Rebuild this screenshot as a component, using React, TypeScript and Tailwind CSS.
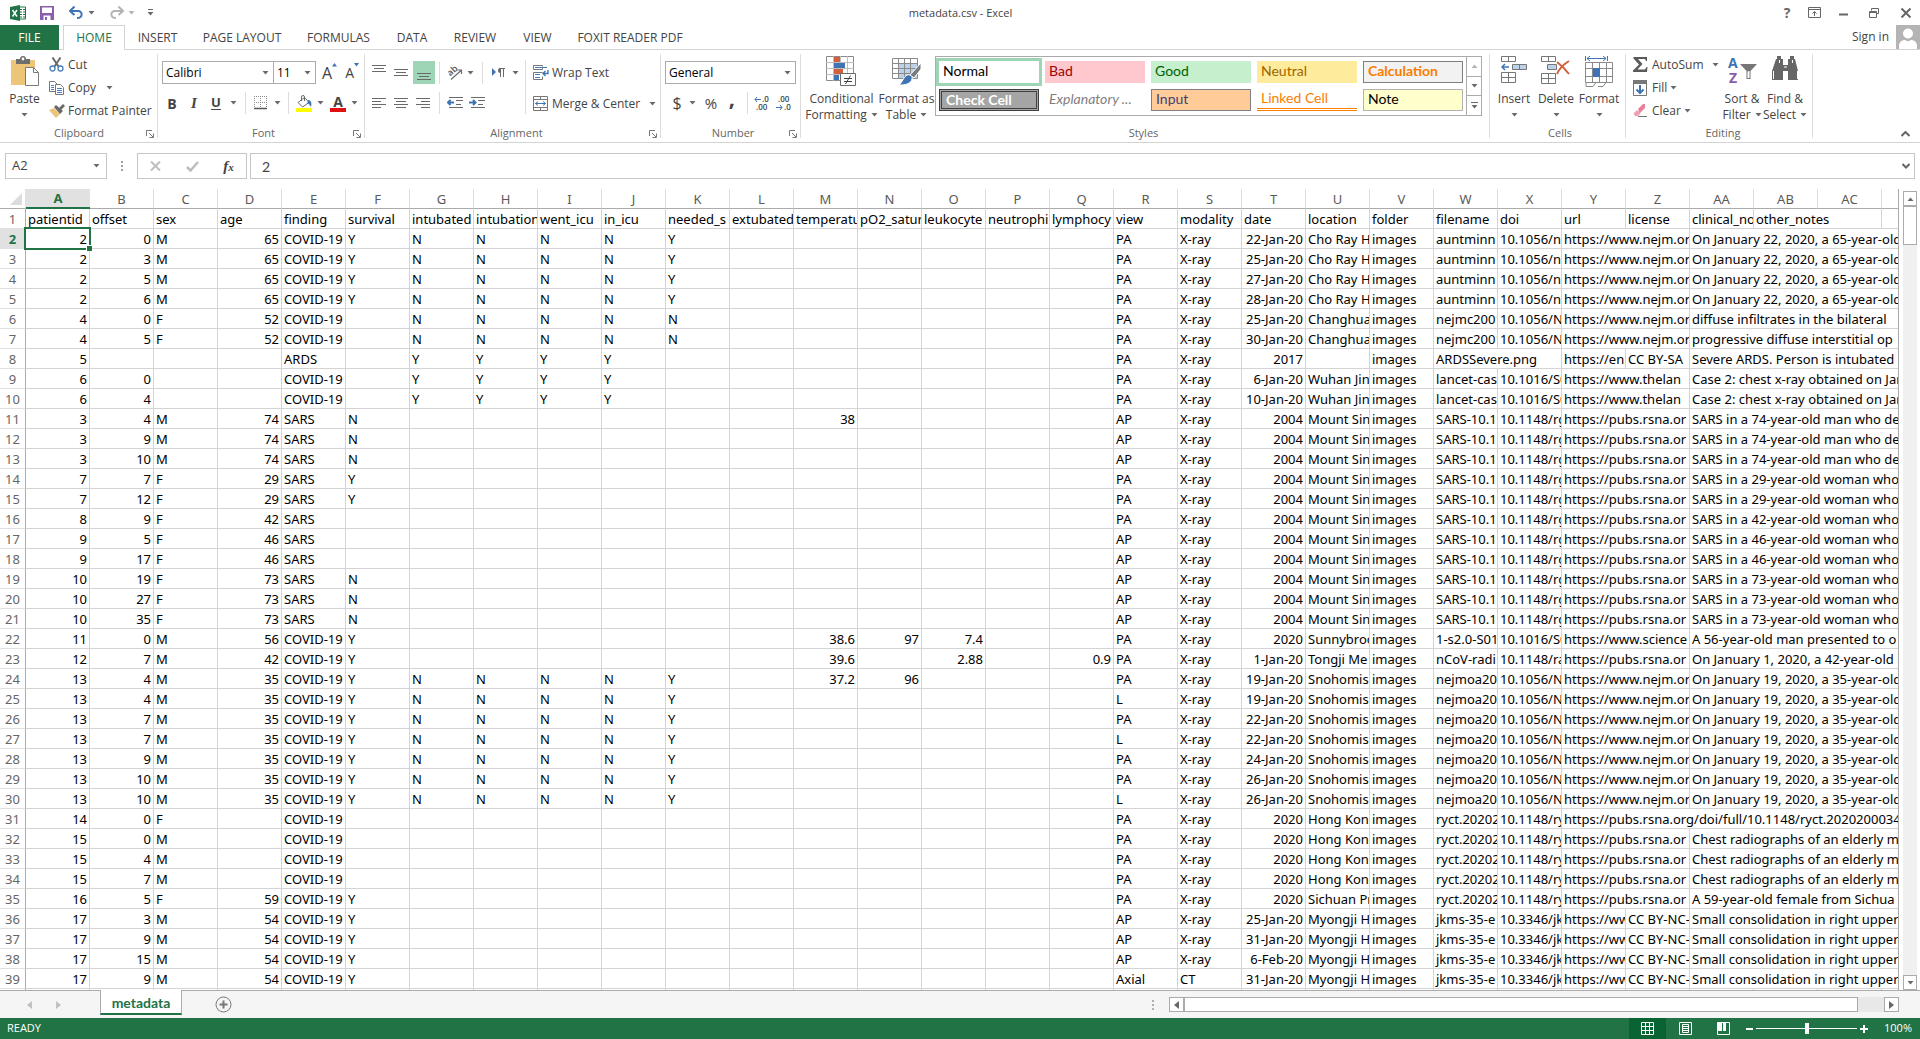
import { useState, ReactNode } from 'react';

const headers =
  'patientid|offset|sex|age|finding|survival|intubated|intubation|went_icu|in_icu|needed_s|extubated|temperatu|pO2_satur|leukocyte|neutrophi|lymphocy|view|modality|date|location|folder|filename|doi|url|license|clinical_no|other_notes';

// location, folder, filename, doi, url, license
const sources: Record<string, string> = {
  choRay: 'Cho Ray H|images|auntminn|10.1056/n|https://www.nejm.or|',
  changhua: 'Changhua|images|nejmc2001|10.1056/N|https://www.nejm.or|',
  ards: '|images|ARDSSevere.png||https://en.|CC BY-SA',
  wuhan: 'Wuhan Jin|images|lancet-cas|10.1016/S0|https://www.thelan|',
  sinai: 'Mount Sin|images|SARS-10.1|10.1148/rg|https://pubs.rsna.or|',
  sunny: 'Sunnybroo|images|1-s2.0-S01|10.1016/S0|https://www.science|',
  tongji: 'Tongji Me|images|nCoV-radi|10.1148/ra|https://pubs.rsna.or|',
  snohomish: 'Snohomis|images|nejmoa20|10.1056/N|https://www.nejm.or|',
  hkUrl: 'Hong Kong|images|ryct.20202|10.1148/ry|https://pubs.rsna.org/doi/full/10.1148/ryct.2020200034|',
  hk: 'Hong Kong|images|ryct.20202|10.1148/ry|https://pubs.rsna.or|',
  sichuan: 'Sichuan Pr|images|ryct.20202|10.1148/ry|https://pubs.rsna.or|',
  myongji: 'Myongji H|images|jkms-35-e|10.3346/jk|https://ww|CC BY-NC-',
};

const jan22 = 'On January 22, 2020, a 65-year-old';
const jan19 = 'On January 19, 2020, a 35-year-old';
const case2 = 'Case 2: chest x-ray obtained on Jan';
const sarsMan = 'SARS in a 74-year-old man who de';
const sars29 = 'SARS in a 29-year-old woman who';
const sars46 = 'SARS in a 46-year-old woman who';
const sars73 = 'SARS in a 73-year-old woman who';
const elderly = 'Chest radiographs of an elderly m';
const small = 'Small consolidation in right upper';

// patient columns (A-Q), scan columns (R-T), source, clinical notes
const records: [string, string, string, string][] = [
  ['2|0|M|65|COVID-19|Y|N|N|N|N|Y||||||', 'PA|X-ray|22-Jan-20', 'choRay', jan22],
  ['2|3|M|65|COVID-19|Y|N|N|N|N|Y||||||', 'PA|X-ray|25-Jan-20', 'choRay', jan22],
  ['2|5|M|65|COVID-19|Y|N|N|N|N|Y||||||', 'PA|X-ray|27-Jan-20', 'choRay', jan22],
  ['2|6|M|65|COVID-19|Y|N|N|N|N|Y||||||', 'PA|X-ray|28-Jan-20', 'choRay', jan22],
  ['4|0|F|52|COVID-19||N|N|N|N|N||||||', 'PA|X-ray|25-Jan-20', 'changhua', 'diffuse infiltrates in the bilateral'],
  ['4|5|F|52|COVID-19||N|N|N|N|N||||||', 'PA|X-ray|30-Jan-20', 'changhua', 'progressive diffuse interstitial op'],
  ['5||||ARDS||Y|Y|Y|Y|||||||', 'PA|X-ray|2017', 'ards', 'Severe ARDS. Person is intubated'],
  ['6|0|||COVID-19||Y|Y|Y|Y|||||||', 'PA|X-ray|6-Jan-20', 'wuhan', case2],
  ['6|4|||COVID-19||Y|Y|Y|Y|||||||', 'PA|X-ray|10-Jan-20', 'wuhan', case2],
  ['3|4|M|74|SARS|N|||||||38||||', 'AP|X-ray|2004', 'sinai', sarsMan],
  ['3|9|M|74|SARS|N|||||||||||', 'AP|X-ray|2004', 'sinai', sarsMan],
  ['3|10|M|74|SARS|N|||||||||||', 'AP|X-ray|2004', 'sinai', sarsMan],
  ['7|7|F|29|SARS|Y|||||||||||', 'PA|X-ray|2004', 'sinai', sars29],
  ['7|12|F|29|SARS|Y|||||||||||', 'PA|X-ray|2004', 'sinai', sars29],
  ['8|9|F|42|SARS||||||||||||', 'PA|X-ray|2004', 'sinai', 'SARS in a 42-year-old woman who'],
  ['9|5|F|46|SARS||||||||||||', 'AP|X-ray|2004', 'sinai', sars46],
  ['9|17|F|46|SARS||||||||||||', 'AP|X-ray|2004', 'sinai', sars46],
  ['10|19|F|73|SARS|N|||||||||||', 'AP|X-ray|2004', 'sinai', sars73],
  ['10|27|F|73|SARS|N|||||||||||', 'AP|X-ray|2004', 'sinai', sars73],
  ['10|35|F|73|SARS|N|||||||||||', 'AP|X-ray|2004', 'sinai', sars73],
  ['11|0|M|56|COVID-19|Y|||||||38.6|97|7.4||', 'PA|X-ray|2020', 'sunny', 'A 56-year-old man presented to o'],
  ['12|7|M|42|COVID-19|Y|||||||39.6||2.88||0.9', 'PA|X-ray|1-Jan-20', 'tongji', 'On January 1, 2020, a 42-year-old m'],
  ['13|4|M|35|COVID-19|Y|N|N|N|N|Y||37.2|96|||', 'PA|X-ray|19-Jan-20', 'snohomish', jan19],
  ['13|4|M|35|COVID-19|Y|N|N|N|N|Y||||||', 'L|X-ray|19-Jan-20', 'snohomish', jan19],
  ['13|7|M|35|COVID-19|Y|N|N|N|N|Y||||||', 'PA|X-ray|22-Jan-20', 'snohomish', jan19],
  ['13|7|M|35|COVID-19|Y|N|N|N|N|Y||||||', 'L|X-ray|22-Jan-20', 'snohomish', jan19],
  ['13|9|M|35|COVID-19|Y|N|N|N|N|Y||||||', 'PA|X-ray|24-Jan-20', 'snohomish', jan19],
  ['13|10|M|35|COVID-19|Y|N|N|N|N|Y||||||', 'PA|X-ray|26-Jan-20', 'snohomish', jan19],
  ['13|10|M|35|COVID-19|Y|N|N|N|N|Y||||||', 'L|X-ray|26-Jan-20', 'snohomish', jan19],
  ['14|0|F||COVID-19||||||||||||', 'PA|X-ray|2020', 'hkUrl', ''],
  ['15|0|M||COVID-19||||||||||||', 'PA|X-ray|2020', 'hk', elderly],
  ['15|4|M||COVID-19||||||||||||', 'PA|X-ray|2020', 'hk', elderly],
  ['15|7|M||COVID-19||||||||||||', 'PA|X-ray|2020', 'hk', elderly],
  ['16|5|F|59|COVID-19|Y|||||||||||', 'PA|X-ray|2020', 'sichuan', 'A 59-year-old female from Sichua'],
  ['17|3|M|54|COVID-19|Y|||||||||||', 'AP|X-ray|25-Jan-20', 'myongji', small],
  ['17|9|M|54|COVID-19|Y|||||||||||', 'AP|X-ray|31-Jan-20', 'myongji', small],
  ['17|15|M|54|COVID-19|Y|||||||||||', 'AP|X-ray|6-Feb-20', 'myongji', small],
  ['17|9|M|54|COVID-19|Y|||||||||||', 'Axial|CT|31-Jan-20', 'myongji', small],
];

const letters = 'A B C D E F G H I J K L M N O P Q R S T U V W X Y Z AA AB AC'.split(' ');
const COLS = 30;
const numeric = [0, 1, 3, 12, 13, 14, 16, 19];
// columns whose long text runs over the empty cells to their right
const spilling = [22, 24, 26];

const rows: string[][] = [
  headers.split('|'),
  ...records.map(([patient, scan, source, notes]) =>
    [patient, scan, sources[source], notes].join('|').split('|')
  ),
  [],
];

const Caret = ({ className = '' }: { className?: string }) => (
  <svg width="7" height="4" viewBox="0 0 7 4" className={`shrink-0 ${className}`}>
    <path d="M0.5 0h6L3.5 3.5z" fill="#6a6a6a" />
  </svg>
);

const Sep = ({ className = 'h-[22px]' }: { className?: string }) => (
  <div className={`w-px shrink-0 bg-[#dcdcdc] ${className}`} />
);

interface GroupProps {
  label: string;
  className: string;
  launcher?: boolean;
  children: ReactNode;
}

const Group = ({ label, className, launcher, children }: GroupProps) => (
  <div className={`relative flex h-[92px] flex-col pt-[3px] ${className}`}>
    <div className="flex h-[72px]">{children}</div>
    <div className="flex h-[17px] items-center justify-center text-[11px] text-[#666]">{label}</div>
    <div className="absolute top-1 right-0 h-[84px] w-px bg-[#dcdcdc]" />
    {launcher && (
      <button aria-label={`${label} settings`} className="absolute right-1 bottom-1">
        <svg width="8" height="8" viewBox="0 0 8 8" fill="none" stroke="#777">
          <path d="M0.5 6V0.5H6M3 3l4 4M7.5 3.5v4h-4" />
        </svg>
      </button>
    )}
  </div>
);

interface BigButtonProps {
  icon: ReactNode;
  lines: [string, string?];
  className: string;
}

const BigButton = ({ icon, lines, className }: BigButtonProps) => (
  <button className={`flex shrink-0 flex-col items-center pt-[3px] leading-4 ${className}`}>
    <span className="flex h-[35px] items-start justify-center">{icon}</span>
    <span className="whitespace-nowrap">{lines[0]}</span>
    <span className="flex h-4 items-center gap-1 whitespace-nowrap">
      {lines[1]}
      <Caret />
    </span>
  </button>
);

const SmallButton = ({ icon, label, caret }: { icon: ReactNode; label: string; caret?: string }) => (
  <button className="flex h-[23px] items-center whitespace-nowrap">
    <span className="flex w-[19px] shrink-0">{icon}</span>
    {label}
    {caret && <Caret className={caret} />}
  </button>
);

/* ---------- ribbon icons ---------- */

const PasteIcon = () => (
  <svg width="30" height="31" viewBox="0 0 30 31">
    <path d="M1 4h24v9h-9v16H1z" fill="#ecc579" />
    <path d="M6 3h4a3 3 0 0 1 6 0h4v5H6z" fill="#6e6e6e" />
    <circle cx="13" cy="3" r="1.4" fill="#fff" />
    <path d="M15.5 11.5h8l5 5v13h-13z" fill="#fff" stroke="#7a7a7a" />
    <path d="M23.5 11.5v5h5" fill="none" stroke="#7a7a7a" />
  </svg>
);

const CutIcon = () => (
  <svg width="15" height="15" viewBox="0 0 15 15" fill="none">
    <path d="M3.5 0.5l6 9M11.5 0.5l-6 9" stroke="#6a6a6a" strokeWidth="2" />
    <circle cx="3.5" cy="11.5" r="2.5" stroke="#4a7ebb" strokeWidth="1.3" />
    <circle cx="11.5" cy="11.5" r="2.5" stroke="#4a7ebb" strokeWidth="1.3" />
  </svg>
);

const CopyIcon = () => (
  <svg width="15" height="14" viewBox="0 0 15 14" fill="#fff" stroke="#777">
    <path d="M0.5 0.5h5l3 3v7h-8z" />
    <path d="M2 4.5h3M2 6.5h3M2 8.5h3" stroke="#4a7ebb" />
    <path d="M6.5 3.5h5l3 3v7h-8z" />
    <path d="M8 7.5h5M8 9.5h5M8 11.5h5" stroke="#4a7ebb" />
  </svg>
);

const PainterIcon = () => (
  <svg width="16" height="14" viewBox="0 0 16 14">
    <path d="M0 6l5-2 6 6-4 4z" fill="#ecc579" />
    <path d="M5 3l2-2 7 6-3 3z" fill="#6a6a6a" />
    <path d="M10 4l4-4 2 2-4 4z" fill="#6a6a6a" />
  </svg>
);

const Lines = ({ spans, top }: { spans: [number, number][]; top: number }) => (
  <svg width="15" height="16" viewBox="0 0 15 16" stroke="#6a6a6a">
    {spans.map(([x1, x2], i) => (
      <path key={i} d={`M${x1} ${top + i * 3 + 0.5}H${x2}`} />
    ))}
  </svg>
);

const OrientationIcon = () => (
  <svg width="20" height="20" viewBox="-3 -2 20 20" fill="none" stroke="#6a6a6a">
    <text x="0" y="9" fontSize="9" fontWeight="600" fill="#555" stroke="none" transform="rotate(-42 5 6)">
      ab
    </text>
    <path d="M4 14.5L14 5.5M10.5 5h4v4" strokeWidth="1.2" />
  </svg>
);

const DirectionIcon = () => (
  <svg width="13" height="11" viewBox="0 0 13 11">
    <path d="M0 1v8L4 5z" fill="#3e74b4" />
    <path d="M7 1.5h6M8.5 1v9M11.5 1v9" stroke="#6a6a6a" fill="none" />
    <path d="M8.5 1v5a2.5 2.5 0 0 1 0-5z" fill="#6a6a6a" />
  </svg>
);

const IndentIcon = ({ right }: { right?: boolean }) => (
  <svg width="17" height="12" viewBox="0 0 17 12" fill="none" stroke="#6a6a6a">
    <path d="M2 0.5h14M9 3.5h7M9 7.5h5M2 10.5h14" />
    {right ? (
      <path d="M0 5.5h6M4 3l2.5 2.5L4 8" stroke="#3e74b4" strokeWidth="2" />
    ) : (
      <path d="M1 5.5h6M3.5 3L1 5.5L3.5 8" stroke="#3e74b4" strokeWidth="2" />
    )}
  </svg>
);

const WrapIcon = () => (
  <svg width="16" height="15" viewBox="0 0 16 15" fill="none" stroke="#777">
    <path d="M9.5 1.5V0.5h-9v4h9v-2M9.5 7.5h-9v7h9v-3" />
    <path d="M2 2.5h12M2 9.5h5M2 12.5h5" stroke="#4a7ebb" />
    <path d="M15 5v3.5h-5M12.5 6l-2.5 2.5l2.5 2.5" stroke="#3e74b4" strokeWidth="1.4" />
  </svg>
);

const MergeIcon = () => (
  <svg width="15" height="15" viewBox="0 0 15 15" fill="none" stroke="#777">
    <path d="M0.5 0.5h14v14h-14zM0.5 3.5h14M0.5 11.5h14M7.5 0v3M7.5 12v3" />
    <path d="M2.5 7.5h10M5 5.5l-2.5 2l2.5 2M10 5.5l2.5 2l-2.5 2" stroke="#3e74b4" />
  </svg>
);

const FillIcon = () => (
  <svg width="16" height="17" viewBox="0 0 16 17" fill="none">
    <path d="M2 7.5L8.5 2.5l4.5 5l-6.5 4.5z" stroke="#6a6a6a" fill="#fff" />
    <path d="M5.5 6V2a1.5 1.5 0 0 1 3 0v4" stroke="#6a6a6a" />
    <path d="M12 5c3 0 4 3 3 7c-1-2-2-3-3.5-4z" fill="#3e74b4" />
    <path d="M0 13h16v4H0z" fill="#ffff00" />
  </svg>
);

const BordersIcon = () => (
  <svg width="13" height="14" viewBox="0 0 13 14" stroke="#8a8a8a" fill="none">
    <path d="M0.5 0v12M6.5 0v12M12.5 0v12M0 0.5h13M0 6.5h13" strokeDasharray="1 1" />
    <path d="M0 12.5h13" stroke="#555" strokeWidth="1.5" />
  </svg>
);

const DecimalIcon = ({ less }: { less?: boolean }) => (
  <svg width="16" height="20" viewBox="0 0 16 20" fontSize="8" fontWeight="600" fill="#444">
    <text x={less ? 2 : 8} y="9">{less ? '.00' : '.0'}</text>
    <text x={less ? 8 : 2} y="17">{less ? '.0' : '.00'}</text>
    {less ? (
      <path d="M0 14.5h6M4 12l2 2.5l-2 2.5" fill="none" stroke="#3e74b4" />
    ) : (
      <path d="M1 6.5h6M3 4l-2 2.5l2 2.5" fill="none" stroke="#3e74b4" />
    )}
  </svg>
);

const ConditionalIcon = () => (
  <svg width="31" height="31" viewBox="0 0 31 31" fill="none">
    <path d="M0.5 0.5h27v24h-27z" fill="#fff" stroke="#8a8a8a" />
    <path d="M7.5 0v25M14.5 0v25M21.5 0v25M0 6.5h28M0 12.5h28M0 18.5h28" stroke="#bdbdbd" />
    <path d="M8 1h6v5H8zM8 13h9v5H8z" fill="#d0603e" />
    <path d="M8 7h11v5H8zM8 19h5v5H8z" fill="#3e74b4" />
    <path d="M14.5 17.5h15v12h-15z" fill="#fff" stroke="#6a6a6a" />
    <path d="M18 22.5h8M18 25.5h8M24.5 19.5l-5 8.5" stroke="#444" />
  </svg>
);

const FormatTableIcon = () => (
  <svg width="30" height="30" viewBox="0 0 30 30" fill="none">
    <path d="M1 3h25v20H1z" fill="#fff" />
    <path d="M7 8h18v15H7z" fill="#bcd2e8" />
    <path d="M0.5 2.5h25v20h-25zM6.5 2v21M12.5 2v21M18.5 2v21M0 7.5h26M0 12.5h26M0 17.5h26" stroke="#8a8a8a" />
    <path d="M29 7v6l-7 9-4-3z" fill="#7a7a7a" stroke="#fff" />
    <path d="M15 19c3-1 6 1 5 4c-1 5-7 6-13 6c4-3 4-8 8-10z" fill="#3e74b4" stroke="#fff" />
  </svg>
);

const InsertIcon = () => (
  <svg width="27" height="28" viewBox="0 0 27 28" fill="#fff" stroke="#777">
    <path d="M0.5 0.5h14v5h-14zM7.5 0.5v5" />
    <path d="M0.5 16.5h14v10h-14zM7.5 16.5v10M0.5 21.5h14" />
    <path d="M11.5 8.5h14v5h-14zM18.5 8.5v5" fill="#bcd2e8" />
    <path d="M1 11h7M4 8l-3 3l3 3" fill="none" stroke="#3e74b4" strokeWidth="1.5" />
  </svg>
);

const DeleteIcon = () => (
  <svg width="30" height="28" viewBox="0 0 30 28" fill="#fff" stroke="#777">
    <path d="M0.5 0.5h14v5h-14zM7.5 0.5v5" />
    <path d="M0.5 17.5h14v10h-14zM7.5 17.5v10M0.5 22.5h14" />
    <path d="M6.5 8.5h9v5h-9z" fill="#bcd2e8" />
    <path d="M16 6c4 3 8 7 12 12M28 5c-5 3-10 8-12 13" fill="none" stroke="#d0603e" strokeWidth="2" />
  </svg>
);

const FormatIcon = () => (
  <svg width="29" height="32" viewBox="0 0 29 32" fill="#fff" stroke="#8a8a8a">
    <path d="M0.5 6.5h27v20h-27zM7.5 6v21M14.5 6v21M21.5 6v21M0 12.5h28M0 20.5h28" />
    <path d="M8 12h7v9H8z" fill="#3e74b4" stroke="none" />
    <path d="M1 27v3.5h7l3-4M13 30.5h5l3-4" fill="none" />
    <path d="M0.5 0v5M22.5 0v5M2 2.5h19M5 0l-3 2.5l3 2.5M18 0l3 2.5l-3 2.5" fill="none" stroke="#3e74b4" />
  </svg>
);

const SumIcon = () => (
  <svg width="15" height="15" viewBox="0 0 15 15">
    <path d="M0.5 0H14v4h-1l-1-2H5l4.5 5L4.5 12.5H12l1.5-2.5h1L14 15H0v-1.5L6 7.5L0.5 1.5z" fill="#5a5a5a" />
  </svg>
);

const FillDownIcon = () => (
  <svg width="14" height="16" viewBox="0 0 14 16" fill="none">
    <path d="M0.5 0.5h13v15h-13z" stroke="#777" fill="#fff" />
    <path d="M0 0h14v4H0z" fill="#777" />
    <path d="M7 5v8M3.5 9.5l3.5 3.5l3.5-3.5" stroke="#3e74b4" strokeWidth="2" />
  </svg>
);

const ClearIcon = () => (
  <svg width="15" height="13" viewBox="0 0 15 13">
    <path d="M5 5l5-5h2v4L6.5 9.5z" fill="#e8829a" />
    <path d="M4 6l3.5 3.5L5 12H2L0.5 9.5z" fill="#eea0b2" />
    <path d="M5 12.5h9" stroke="#777" />
  </svg>
);

const SortIcon = () => (
  <svg width="30" height="31" viewBox="0 0 30 31" fontSize="14" fontWeight="700">
    <text x="1" y="12" fill="#3e74b4">A</text>
    <text x="2" y="27" fill="#8e5ba8">Z</text>
    <path d="M13 8h17l-6.5 7v8h-4v-8z" fill="#777" />
    <path d="M20.5 15.5v6.5h2v-7" fill="#fff" />
  </svg>
);

const FindIcon = () => (
  <svg width="27" height="25" viewBox="0 0 27 25" fill="#666">
    <path d="M5 0h4v3h2v6h5V3h2V0h4v3h1l3 12v9H16v-9h-5v9H0v-9L4 3h1z" />
    <path d="M1.5 15v8M12 11h3M25.5 15v8M7.5 4v3M20.5 4v3" stroke="#fff" />
  </svg>
);

/* ---------- page parts ---------- */

const TitleBar = () => (
  <div className="flex h-[25px] items-center text-[12px] text-[#444]">
    <div className="flex flex-1 items-center pl-[10px]">
      <svg width="16" height="16" viewBox="0 0 16 16">
        <path d="M9 2h6.5v12H9z" fill="#fff" stroke="#217346" />
        <path d="M10 4.5h2M13 4.5h2M10 7h2M13 7h2M10 9.5h2M13 9.5h2M10 12h2M13 12h2" stroke="#217346" />
        <path d="M0 2l10-2v16L0 14z" fill="#217346" />
        <path d="M2.5 5l4.5 6.5M7 5l-4.5 6.5" stroke="#fff" strokeWidth="1.5" />
      </svg>
      <button aria-label="Save" className="ml-[14px]">
        <svg width="14" height="14" viewBox="0 0 14 14">
          <path d="M0 0h14v14H0z" fill="#8a5eaa" />
          <path d="M2 1.5h10V7H2zM3.5 9.5h7V14h-7z" fill="#fff" />
          <path d="M5 11h2v3H5z" fill="#8a5eaa" />
        </svg>
      </button>
      <button aria-label="Undo" className="ml-[15px]">
        <svg width="15" height="13" viewBox="0 0 15 13" fill="none" stroke="#3e74b4" strokeWidth="2">
          <path d="M1 5h8c5 0 5 7-1 7M5.5 0.5L1 5l4.5 4" />
        </svg>
      </button>
      <Caret className="ml-1" />
      <button aria-label="Redo" className="ml-[14px]">
        <svg width="15" height="13" viewBox="0 0 15 13" fill="none" stroke="#b4b4b4" strokeWidth="2">
          <path d="M14 5H6c-5 0-5 7 1 7M9.5 0.5L14 5l-4.5 4" />
        </svg>
      </button>
      <Caret className="ml-1 opacity-50" />
      <button aria-label="Customize toolbar" className="ml-3">
        <svg width="7" height="7" viewBox="0 0 7 7">
          <path d="M1 0.5h5" stroke="#6a6a6a" />
          <path d="M0.5 3h6L3.5 6.5z" fill="#6a6a6a" />
        </svg>
      </button>
    </div>
    <h1 className="pt-px text-[11px]">metadata.csv - Excel</h1>
    <div className="flex flex-1 items-center justify-end gap-4 pr-[9px] text-[#666]">
      <button aria-label="Help" className="w-[10px] text-[14px] leading-5 font-bold">?</button>
      <button aria-label="Ribbon options">
        <svg width="13" height="11" viewBox="0 0 13 11" fill="none" stroke="#666">
          <path d="M0.5 0.5h12v10h-12zM0.5 2.5h12M6.5 9V4.5M4.5 6.5l2-2l2 2" />
        </svg>
      </button>
      <button aria-label="Minimize" className="px-[2px]">
        <svg width="10" height="8" viewBox="0 0 10 8">
          <path d="M0 5.5h9" stroke="#666" strokeWidth="2" />
        </svg>
      </button>
      <button aria-label="Restore" className="px-[2px]">
        <svg width="10" height="10" viewBox="0 0 10 10" fill="none" stroke="#666">
          <path d="M2.5 2.5v-2h7v5h-2M0.5 3.5h7v6h-7zM0.5 4.5h7" />
        </svg>
      </button>
      <button aria-label="Close" className="pl-1">
        <svg width="10" height="10" viewBox="0 0 10 10" stroke="#666" strokeWidth="2">
          <path d="M0.5 0.5l9 9M9.5 0.5l-9 9" />
        </svg>
      </button>
    </div>
  </div>
);

const tabs = [
  ['INSERT', 'w-[65px]'],
  ['PAGE LAYOUT', 'w-[104px]'],
  ['FORMULAS', 'w-[89px]'],
  ['DATA', 'w-[58px]'],
  ['REVIEW', 'w-[68px]'],
  ['VIEW', 'w-[57px]'],
  ['FOXIT READER PDF', 'w-[128px]'],
];

const TabStrip = () => (
  <div className="flex h-[25px] border-b border-[#d4d4d4] text-[12px] text-[#444]">
    <button className="mr-1 h-[25px] w-[59px] bg-[#217346] text-white">FILE</button>
    <button className="h-[25px] w-[62px] border border-b-0 border-[#d4d4d4] bg-white text-[#217346]">HOME</button>
    {tabs.map(([name, width]) => (
      <button key={name} className={`pt-px whitespace-nowrap ${width}`}>
        {name}
      </button>
    ))}
    <div className="ml-auto flex items-center">
      <a href="#signin">Sign in</a>
      <svg width="24" height="24" viewBox="0 0 24 24" className="ml-[7px]">
        <path d="M0 0h24v24H0z" fill="#b4b4b4" />
        <circle cx="12" cy="8.5" r="5" fill="#fff" />
        <path d="M3 24v-3c0-4 3-6 6-6l3 1.5l3-1.5c3 0 6 2 6 6v3z" fill="#fff" />
      </svg>
    </div>
  </div>
);

const cellStyles = [
  ['Normal', 'bg-white text-black outline-3 outline-[#9fd5b7]'],
  ['Bad', 'bg-[#ffc7ce] text-[#9c0006]'],
  ['Good', 'bg-[#c6efce] text-[#006100]'],
  ['Neutral', 'bg-[#ffeb9c] text-[#9c6500]'],
  ['Calculation', 'bg-[#f2f2f2] border border-[#7f7f7f] font-bold text-[#fa7d00]'],
  ['Check Cell', 'bg-[#a5a5a5] border-3 border-double border-[#3f3f3f] font-bold text-white'],
  ['Explanatory ...', 'italic text-[#7f7f7f]'],
  ['Input', 'bg-[#ffcc99] border border-[#7f7f7f] text-[#3f3f76]'],
  ['Linked Cell', 'border-b-3 border-double border-[#ff8001] text-[#fa7d00]'],
  ['Note', 'bg-[#ffffcc] border border-[#b2b2b2] text-black'],
];

const Ribbon = () => (
  <div className="flex h-[93px] border-b border-[#d4d4d4] text-[12px] text-[#444]">
    <Group label="Clipboard" className="w-[158px]" launcher>
      <BigButton icon={<PasteIcon />} lines={['Paste']} className="w-[49px]" />
      <div>
        <SmallButton icon={<CutIcon />} label="Cut" />
        <SmallButton icon={<CopyIcon />} label="Copy" caret="ml-[10px]" />
        <SmallButton icon={<PainterIcon />} label="Format Painter" />
      </div>
    </Group>

    <Group label="Font" className="w-[207px] pl-1" launcher>
      <div className="flex flex-col gap-2 pt-2">
        <div className="flex h-[23px] items-center">
          <div className="flex h-[23px] w-[112px] items-center border border-[#ababab] pr-1 text-black">
            <select aria-label="Font" className="flex-1 appearance-none pl-[3px] outline-none">
              <option>Calibri</option>
            </select>
            <Caret />
          </div>
          <div className="-ml-px flex h-[23px] w-[43px] items-center border border-[#ababab] pr-1 text-black">
            <select aria-label="Font size" className="w-[30px] appearance-none pl-[3px] outline-none">
              <option>11</option>
            </select>
            <Caret />
          </div>
          <button className="ml-[6px] flex text-[16px] leading-5">
            A
            <svg width="5" height="4" viewBox="0 0 5 4"><path d="M0 3.5h5L2.5 0z" fill="#3e74b4" /></svg>
          </button>
          <button className="ml-2 flex text-[14px] leading-5">
            A
            <svg width="5" height="4" viewBox="0 0 5 4"><path d="M0 0h5L2.5 3.5z" fill="#3e74b4" /></svg>
          </button>
        </div>
        <div className="flex h-[22px] items-center">
          <button className="w-5 text-[14px] font-bold">B</button>
          <button className="w-6 font-['Liberation_Serif',serif] text-[15px] font-bold italic">I</button>
          <button className="w-5 text-[13px] font-bold underline underline-offset-2">U</button>
          <Caret className="ml-1" />
          <Sep className="mx-2 h-[22px]" />
          <button aria-label="Borders"><BordersIcon /></button>
          <Caret className="ml-[7px]" />
          <Sep className="mx-[7px] h-[22px]" />
          <button aria-label="Fill color"><FillIcon /></button>
          <Caret className="ml-[5px]" />
          <button className="ml-[6px] flex h-[17px] w-4 items-center justify-center border-b-4 border-[#e01010] text-[14px] leading-[13px] font-bold">
            A
          </button>
          <Caret className="ml-[5px]" />
        </div>
      </div>
    </Group>

    <Group label="Alignment" className="w-[296px] pl-[7px]" launcher>
      <div className="flex flex-col gap-2 pt-2">
        <div className="flex h-[23px] items-center">
          <button aria-label="Top align" className="w-[22px]"><Lines spans={[[0, 14], [2, 12], [0, 14]]} top={0} /></button>
          <button aria-label="Middle align" className="w-[19px]"><Lines spans={[[0, 14], [2, 12], [0, 14]]} top={4} /></button>
          <button aria-label="Bottom align" className="flex h-[23px] w-[22px] items-center justify-center bg-[#9fd5b7]">
            <Lines spans={[[0, 14], [2, 12], [0, 14]]} top={8} />
          </button>
          <Sep className="ml-1 h-[22px]" />
          <button aria-label="Orientation" className="ml-1"><OrientationIcon /></button>
          <Caret className="ml-[3px]" />
          <Sep className="ml-2 h-[22px]" />
          <button aria-label="Text direction" className="ml-[9px]"><DirectionIcon /></button>
          <Caret className="ml-[7px]" />
        </div>
        <div className="flex h-[22px] items-center">
          <button aria-label="Align left" className="w-[22px]"><Lines spans={[[0, 14], [0, 9], [0, 14], [0, 9]]} top={3} /></button>
          <button aria-label="Center" className="w-[22px]"><Lines spans={[[0, 14], [2, 12], [0, 14], [2, 12]]} top={3} /></button>
          <button aria-label="Align right" className="w-[19px]"><Lines spans={[[0, 14], [5, 14], [0, 14], [5, 14]]} top={3} /></button>
          <Sep className="ml-1 h-[22px]" />
          <button aria-label="Decrease indent" className="ml-[7px]"><IndentIcon /></button>
          <button aria-label="Increase indent" className="ml-[5px]"><IndentIcon right /></button>
        </div>
      </div>
      <Sep className="mt-[7px] ml-[6px] h-[54px]" />
      <div className="flex flex-col gap-2 pt-2 pl-[7px]">
        <SmallButton icon={<WrapIcon />} label="Wrap Text" />
        <SmallButton icon={<MergeIcon />} label="Merge & Center" caret="ml-[9px]" />
      </div>
    </Group>

    <Group label="Number" className="w-[140px] pl-1" launcher>
      <div className="flex flex-col gap-2 pt-2">
        <div className="flex h-[23px] w-[131px] items-center border border-[#ababab] pr-1 text-black">
          <select aria-label="Number format" className="flex-1 appearance-none pl-[3px] outline-none">
            <option>General</option>
          </select>
          <Caret />
        </div>
        <div className="flex h-[22px] items-center">
          <button className="w-6 text-[16px]">$</button>
          <Caret />
          <button className="ml-[5px] w-[20px] text-[15px]">%</button>
          <button className="w-[22px] pb-3 text-[22px] leading-4 font-bold">,</button>
          <Sep className="ml-1 h-[22px]" />
          <button aria-label="Increase decimal" className="ml-[6px]"><DecimalIcon /></button>
          <button aria-label="Decrease decimal" className="ml-[6px]"><DecimalIcon less /></button>
        </div>
      </div>
    </Group>

    <Group label="Styles" className="min-w-[400px] flex-1 pr-2 pl-1">
      <BigButton icon={<ConditionalIcon />} lines={['Conditional', 'Formatting']} className="w-[73px]" />
      <BigButton icon={<FormatTableIcon />} lines={['Format as', 'Table']} className="w-[57px]" />
      <div className="mt-[3px] flex h-[60px] flex-1 border border-[#ababab]">
        <div className="grid flex-1 grid-cols-5 gap-[6px] py-1 pr-[3px] pl-[3px] font-[Lato,sans-serif] text-[14px]">
          {cellStyles.map(([name, look]) => (
            <button key={name} className={`h-[22px] truncate pb-[2px] pl-1 text-left leading-4 ${look}`}>
              {name}
            </button>
          ))}
        </div>
        <div className="flex w-[15px] flex-col divide-y divide-[#ababab] border-l border-[#ababab]">
          <button aria-label="Scroll up" className="flex flex-1 items-center justify-center">
            <Caret className="rotate-180 opacity-50" />
          </button>
          <button aria-label="Scroll down" className="flex flex-1 items-center justify-center"><Caret /></button>
          <button aria-label="More styles" className="flex flex-1 flex-col items-center justify-center gap-[2px]">
            <span className="h-px w-[7px] bg-[#6a6a6a]" />
            <Caret />
          </button>
        </div>
      </div>
    </Group>

    <Group label="Cells" className="w-[136px] pl-1">
      <BigButton icon={<InsertIcon />} lines={['Insert']} className="w-[40px]" />
      <BigButton icon={<DeleteIcon />} lines={['Delete']} className="w-[44px]" />
      <BigButton icon={<FormatIcon />} lines={['Format']} className="w-[42px]" />
    </Group>

    <Group label="Editing" className="w-[187px] pl-[7px]">
      <div className="w-[87px]">
        <SmallButton icon={<SumIcon />} label="AutoSum" caret="ml-2" />
        <SmallButton icon={<FillDownIcon />} label="Fill" caret="ml-[3px]" />
        <SmallButton icon={<ClearIcon />} label="Clear" caret="ml-[3px]" />
      </div>
      <BigButton icon={<SortIcon />} lines={['Sort &', 'Filter']} className="w-[44px]" />
      <BigButton icon={<FindIcon />} lines={['Find &', 'Select']} className="w-[42px]" />
    </Group>

    <div className="flex w-[107px] items-end justify-end pr-[10px] pb-[5px]">
      <button aria-label="Collapse ribbon">
        <svg width="9" height="6" viewBox="0 0 9 6" fill="none" stroke="#666" strokeWidth="2">
          <path d="M0.5 5l4-4l4 4" />
        </svg>
      </button>
    </div>
  </div>
);

const FormulaBar = () => {
  const [formula, setFormula] = useState<string>('2');

  return (
    <div className="flex h-[46px] items-center pr-[5px] pl-[5px] text-[#444]">
      <div className="flex h-[26px] w-[102px] items-center border border-[#c6c6c6] pr-[6px]">
        <input aria-label="Name box" defaultValue="A2" className="w-0 flex-1 pl-[6px] text-[13px] outline-none" />
        <Caret />
      </div>
      <div className="flex w-[30px] flex-col items-center gap-[2px]">
        <span className="h-[2px] w-[2px] bg-[#a0a0a0]" />
        <span className="h-[2px] w-[2px] bg-[#a0a0a0]" />
        <span className="h-[2px] w-[2px] bg-[#a0a0a0]" />
      </div>
      <div className="flex h-[26px] w-[110px] items-center justify-around border border-[#c6c6c6]">
        <button aria-label="Cancel">
          <svg width="11" height="10" viewBox="0 0 11 10" stroke="#bdbdbd" strokeWidth="2">
            <path d="M1 0.5l9 9M10 0.5l-9 9" />
          </svg>
        </button>
        <button aria-label="Enter">
          <svg width="13" height="11" viewBox="0 0 13 11" fill="none" stroke="#bdbdbd" strokeWidth="2.5">
            <path d="M1 6l3.5 3.5L12 1" />
          </svg>
        </button>
        <button className="font-['Liberation_Serif',serif] text-[15px] leading-4 font-bold italic">
          f<span className="text-[11px]">x</span>
        </button>
      </div>
      <div className="ml-[3px] flex h-[26px] flex-1 items-center border border-[#c6c6c6] pr-1">
        <input
          aria-label="Formula bar"
          value={formula}
          onChange={e => setFormula(e.target.value)}
          className="flex-1 pl-[11px] font-[Lato,sans-serif] text-[14px] outline-none"
        />
        <svg width="8" height="6" viewBox="0 0 8 6" fill="none" stroke="#666" strokeWidth="2">
          <path d="M0.5 1l3.5 3.5L7.5 1" />
        </svg>
      </div>
    </div>
  );
};

const Row = ({ cells, index }: { cells: string[]; index: number }) => {
  const selectedRow = index === 1;
  const tds: ReactNode[] = [];

  for (let col = 0; col < COLS; col++) {
    const start = col;
    const text = cells[col] || '';
    if (text && spilling.includes(col)) {
      while (col + 1 < COLS && !cells[col + 1]) col++;
    }
    if (index === 0 && start === 27) col++;
    const selected = selectedRow && start === 0;
    const right = index > 0 && numeric.includes(start);
    tds.push(
      <td
        key={start}
        colSpan={col - start + 1}
        className={`h-5 border-b border-[#d4d4d4] px-[2px] pt-px whitespace-nowrap ${col < COLS - 1 ? 'border-r' : ''} ${
          right ? 'text-right' : ''
        } ${selected ? 'relative overflow-visible' : 'overflow-hidden'}`}
      >
        {text}
        {selected && (
          <div className="absolute -inset-[2px] border-2 border-[#217346]">
            <span className="absolute -right-[3px] -bottom-[3px] h-[6px] w-[6px] border-t border-l border-white bg-[#217346]" />
          </div>
        )}
      </td>
    );
  }

  return (
    <tr>
      <th
        scope="row"
        className={`h-5 border-r border-b border-b-[#e0e0e0] pt-px text-center ${
          selectedRow ? 'border-r-[#217346] bg-[#e1e1e1] font-bold text-[#217346]' : 'border-r-[#ababab] font-normal text-[#666]'
        }`}
      >
        {index < rows.length - 1 ? index + 1 : ''}
      </th>
      {tds}
    </tr>
  );
};

const Sheet = () => (
  <div className="flex min-h-0 flex-1">
    <div className="min-w-0 flex-1 overflow-hidden border-r border-[#ababab]">
      <table className="w-full table-fixed border-separate border-spacing-0 font-['Noto_Sans',sans-serif] text-[13px] leading-[18px] text-black">
        <colgroup>
          <col className="w-[26px]" />
          {letters.map(l => (
            <col key={l} className="w-[64px]" />
          ))}
          <col />
        </colgroup>
        <thead>
          <tr className="text-[#5a5a5a]">
            <td className="h-5 border-r border-b border-r-[#e0e0e0] border-b-[#ababab]">
              <svg width="12" height="12" viewBox="0 0 12 12" className="mr-[3px] ml-auto">
                <path d="M12 0v12H0z" fill="#dcdcdc" />
              </svg>
            </td>
            {letters.map((l, i) => (
              <th
                key={l}
                scope="col"
                className={
                  i === 0
                    ? 'h-5 border-b-2 border-[#217346] bg-[#e1e1e1] font-bold text-[#217346]'
                    : 'h-5 border-r border-b border-r-[#dcdcdc] border-b-[#ababab] font-normal'
                }
              >
                {l}
              </th>
            ))}
            <td className="border-b border-[#ababab]" />
          </tr>
        </thead>
        <tbody>
          {rows.map((cells, i) => (
            <Row key={i} cells={cells} index={i} />
          ))}
        </tbody>
      </table>
    </div>
    <div className="mt-[2px] mr-[3px] ml-1 flex w-[14px] flex-col bg-[#f0f0f0]">
      <button aria-label="Scroll up" className="flex h-[15px] items-center justify-center border border-[#ababab] bg-white">
        <Caret className="rotate-180" />
      </button>
      <div className="h-[39px] border border-[#ababab] bg-white" />
      <button aria-label="Scroll down" className="mt-auto flex h-[15px] items-center justify-center border border-[#ababab] bg-white">
        <Caret />
      </button>
    </div>
  </div>
);

const Arrow = ({ left, color }: { left?: boolean; color: string }) => (
  <svg width="5" height="8" viewBox="0 0 5 8">
    <path d={left ? 'M5 0v8L0 4z' : 'M0 0v8L5 4z'} fill={color} />
  </svg>
);

const SheetTabs = () => (
  <div className="flex h-7 border-t border-[#ababab] bg-[#f5f5f5]">
    <div className="flex w-[100px] items-center gap-6 pl-[27px]">
      <button aria-label="Previous sheet"><Arrow left color="#c0c0c0" /></button>
      <button aria-label="Next sheet"><Arrow color="#c0c0c0" /></button>
    </div>
    <button className="-mt-px h-[25px] w-[82px] border-x border-b-2 border-x-[#ababab] border-b-[#217346] bg-white pt-px font-[Lato,sans-serif] text-[14px] font-bold text-[#217346]">
      metadata
    </button>
    <button aria-label="New sheet" className="ml-[33px]">
      <svg width="17" height="17" viewBox="0 0 17 17" fill="none" stroke="#777">
        <circle cx="8.5" cy="8.5" r="7.5" />
        <path d="M8.5 4.5v8M4.5 8.5h8" strokeWidth="2" />
      </svg>
    </button>
    <div className="mr-[21px] ml-auto flex w-[747px] items-center">
      <div className="flex w-[17px] flex-col gap-[2px]">
        <span className="h-[2px] w-[2px] bg-[#b0b0b0]" />
        <span className="h-[2px] w-[2px] bg-[#b0b0b0]" />
        <span className="h-[2px] w-[2px] bg-[#b0b0b0]" />
      </div>
      <div className="flex h-[15px] flex-1 bg-[#e8e8e8]">
        <button aria-label="Scroll left" className="flex w-[15px] items-center justify-center border border-[#ababab] bg-white">
          <Arrow left color="#666" />
        </button>
        <div className="flex-1 border border-[#ababab] bg-white" />
        <button aria-label="Scroll right" className="ml-[26px] flex w-[15px] items-center justify-center border border-[#ababab] bg-white">
          <Arrow color="#666" />
        </button>
      </div>
    </div>
  </div>
);

const StatusBar = () => {
  const [zoom, setZoom] = useState<number>(100);

  return (
    <div className="flex h-[21px] items-center bg-[#217346] pr-2 pl-[7px] text-[11px] text-white">
      <span>READY</span>
      <div className="ml-auto flex h-full">
        <button aria-label="Normal view" className="flex w-[37px] items-center justify-center bg-[#0a6332]">
          <svg width="13" height="13" viewBox="0 0 13 13" fill="none" stroke="#fff">
            <path d="M0.5 0.5h12v12h-12zM4.5 0v13M8.5 0v13M0 4.5h13M0 8.5h13" />
          </svg>
        </button>
        <button aria-label="Page layout view" className="flex w-[39px] items-center justify-center">
          <svg width="13" height="13" viewBox="0 0 13 13" fill="none" stroke="#fff">
            <path d="M0.5 0.5h12v12h-12zM3.5 2.5h6v8h-6zM4 4.5h5M4 6.5h5M4 8.5h5" />
          </svg>
        </button>
        <button aria-label="Page break preview" className="flex w-[37px] items-center justify-center">
          <svg width="13" height="13" viewBox="0 0 13 13" fill="none" stroke="#fff">
            <path d="M0.5 0.5h12v12h-12z" />
            <path d="M1 1h4v8H1zM6 1h3v8H6z" fill="#fff" stroke="none" />
          </svg>
        </button>
      </div>
      <button aria-label="Zoom out" className="ml-1 h-[2px] w-[7px] bg-white" />
      <input
        type="range"
        aria-label="Zoom"
        min={0}
        max={200}
        value={zoom}
        onChange={e => setZoom(Number(e.target.value))}
        className="mx-[3px] h-[11px] w-[101px] appearance-none bg-transparent [&::-webkit-slider-runnable-track]:h-px [&::-webkit-slider-runnable-track]:bg-white [&::-webkit-slider-thumb]:-mt-[5px] [&::-webkit-slider-thumb]:h-[11px] [&::-webkit-slider-thumb]:w-1 [&::-webkit-slider-thumb]:appearance-none [&::-webkit-slider-thumb]:bg-white"
      />
      <button aria-label="Zoom in">
        <svg width="8" height="8" viewBox="0 0 8 8" stroke="#fff" strokeWidth="2">
          <path d="M4 0v8M0 4h8" />
        </svg>
      </button>
      <span className="w-[44px] text-right">{zoom}%</span>
    </div>
  );
};

const App = () => {
  return (
    <div className="flex h-screen flex-col overflow-hidden bg-white font-['Open_Sans',sans-serif]">
      <TitleBar />
      <TabStrip />
      <Ribbon />
      <FormulaBar />
      <Sheet />
      <SheetTabs />
      <StatusBar />
    </div>
  );
};

export default App;
